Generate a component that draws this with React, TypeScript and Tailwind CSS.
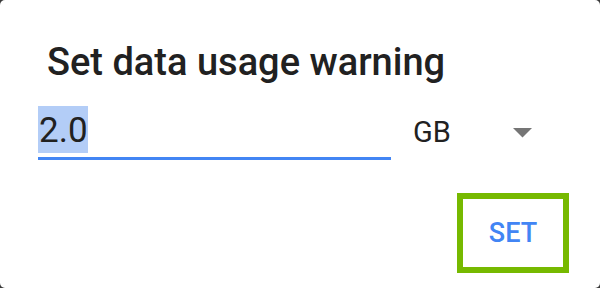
export default function App() {
  return (
    <div className="w-[600px] h-[288px] bg-[#3a3a3a] font-['Roboto',sans-serif]">
      <div className="h-full bg-white rounded-[5px] flex flex-col">
        {/* Title */}
        <h1 className="pl-[47px] pt-[40px] text-[38px] leading-[44px] font-medium text-[#212121]">
          Set data usage warning
        </h1>

        {/* Input row */}
        <div className="flex items-start ml-[38px] mt-[22px]">
          <div className="flex flex-col w-[353px]">
            <span className="self-start h-[47px] pt-[2px] pl-[1px] bg-[#b3cdf7] text-[35px] leading-[45px] text-[#212121]">
              2.0
            </span>
            <div className="mt-[4px] h-[3px] bg-[#4285f4]" />
          </div>
          <span className="w-[100px] ml-[22px] mt-[11px] text-[29px] leading-[30px] text-[#212121]">GB</span>
          <svg className="mt-[22px]" width="19" height="10" viewBox="0 0 19 10" aria-hidden="true">
            <path d="M0 0 L19 0 L9.5 9.5 Z" fill="#757575" />
          </svg>
        </div>

        {/* Action */}
        <div className="flex justify-end pr-[31px] mt-[33px]">
          <button className="w-[112px] h-[80px] border-[6px] border-[#76b900] flex items-center justify-center text-[27px] font-medium text-[#4285f4]">
            SET
          </button>
        </div>
      </div>
    </div>
  )
}
